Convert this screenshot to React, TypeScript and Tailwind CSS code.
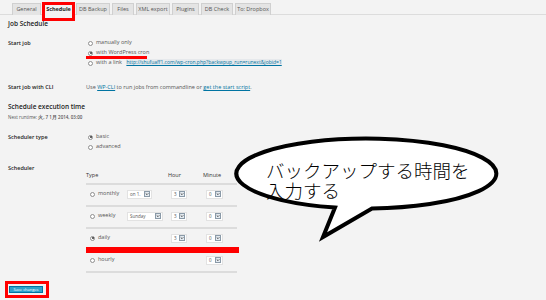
const tabs = ['General', 'Schedule', 'DB Backup', 'Files', 'XML export', 'Plugins', 'DB Check', 'To: Dropbox'];
const tabWidths = ['w-[29px]', 'w-[31px]', 'w-[34px]', 'w-[22px]', 'w-[34px]', 'w-[27px]', 'w-[32px]', 'w-[36px]'];

function Radio({ checked = false }: { checked?: boolean }) {
  return (
    <span className="inline-flex h-[5px] w-[5px] shrink-0 items-center justify-center rounded-full border border-[#8f8f8f] bg-white">
      {checked && <span className="h-[2px] w-[2px] rounded-full bg-[#333]" />}
    </span>
  );
}

function Select({ value, className }: { value: string; className: string }) {
  return (
    <span className={`flex h-[9px] items-center justify-between border border-[#e2e2e2] bg-white pl-[2px] pr-px ${className}`}>
      <span className="text-[4.5px] leading-none text-[#555]">{value}</span>
      <span className="flex h-[6px] w-[6px] items-center justify-center border border-[#8a9aa8] bg-[#e4ebf1]">
        <svg viewBox="0 0 6 6" className="h-[4px] w-[4px]">
          <path d="M1 2 L3 4 L5 2" fill="none" stroke="#333" strokeWidth="1.2" />
        </svg>
      </span>
    </span>
  );
}

function Label({ children }: { children: React.ReactNode }) {
  return <div className="w-[78px] shrink-0 text-[5.5px] font-semibold leading-[10px] text-[#222]">{children}</div>;
}

function Option({ checked, children }: { checked?: boolean; children: React.ReactNode }) {
  return (
    <div className="flex h-[10px] items-center gap-[3px] text-[5.5px] text-[#555]">
      <Radio checked={checked} />
      <span className="leading-none">{children}</span>
    </div>
  );
}

const rows = [
  { type: 'monthly', day: 'on 1.', dayW: 'w-[25px]', hour: true },
  { type: 'weekly', day: 'Sunday', dayW: 'w-[36px]', hour: true },
  { type: 'daily', checked: true, hour: true },
  { type: 'hourly', hour: false },
];

export default function App() {
  return (
    <div className="relative h-[300px] w-[546px] overflow-hidden bg-[#f3f3f3] font-['Open_Sans','Liberation_Sans',sans-serif] text-[#444]">
      <div className="flex h-[15px] items-end gap-[2px] border-b border-[#dcdcdc] pl-[12px]">
        {tabs.map((t, i) => (
          <div
            key={t}
            className={`relative -mb-px h-[12px] border border-b-0 border-[#d0d0d0] text-center text-[5.5px] leading-[11px] ${tabWidths[i]} ${
              i === 1 ? 'bg-[#f3f3f3] font-bold text-[#222]' : 'bg-[#e4e4e4] text-[#555]'
            }`}
          >
            {t}
            {i === 1 && <span className="absolute -left-[2px] -top-[2px] h-[19px] w-[33px] border-[3px] border-[#ff0000]" />}
          </div>
        ))}
      </div>

      <div className="px-[8px]">
        <h2 className="mt-[4px] h-[10px] text-[6.5px] font-semibold leading-[10px] text-[#222]">Job Schedule</h2>

        <div className="mt-[9px] flex">
          <Label>Start job</Label>
          <div className="relative flex flex-col pl-[2px]">
            <Option>manually only</Option>
            <Option checked>with WordPress cron</Option>
            <Option>
              with a link{' '}
              <span className="ml-[3px] bg-[#e6e9ec] text-[5px] text-[#0074a2] underline">
                http://shufuaff1.com/wp-cron.php?backwpup_run=runext&amp;jobid=1
              </span>
            </Option>
            <span className="absolute left-0 top-[18px] h-[3px] w-[61px] bg-[#ff0000]" />
          </div>
        </div>

        <div className="mt-[14px] flex h-[10px]">
          <Label>Start job with CLI</Label>
          <div className="text-[5.5px] leading-[10px] text-[#555]">
            Use <span className="text-[#0074a2] underline">WP-CLI</span> to run jobs from commandline or{' '}
            <span className="text-[#0074a2] underline">get the start script</span>.
          </div>
        </div>

        <h2 className="mt-[9px] h-[12px] text-[6.5px] font-semibold leading-[12px] text-[#222]">Schedule execution time</h2>
        <div className="h-[8px] text-[4.5px] leading-[8px] text-[#555]">
          Next runtime: <span className="font-semibold">火, 7 1月 2014, 03:00</span>
        </div>

        <div className="mt-[11px] flex">
          <Label>Scheduler type</Label>
          <div className="flex flex-col pl-[2px]">
            <Option checked>basic</Option>
            <Option>advanced</Option>
          </div>
        </div>

        <div className="mt-[11px] flex">
          <Label>Scheduler</Label>
          <div className="w-[151px] pt-[7px] text-[5.5px] text-[#555]">
            <div className="flex h-[15px] border-b-2 border-[#dcdcdc] leading-[10px] text-[#333]">
              <span className="w-[82px]">Type</span>
              <span className="w-[35px]">Hour</span>
              <span>Minute</span>
            </div>
            {rows.map((r) => (
              <div key={r.type} className="relative flex h-[22px] items-center border-b-2 border-[#dcdcdc] pb-[2px]">
                <div className="flex w-[82px] items-center gap-[3px] pl-[4px]">
                  <Radio checked={r.checked} />
                  <span className="w-[26px] leading-none">{r.type}</span>
                  {r.day && <Select value={r.day} className={r.dayW} />}
                </div>
                <div className="w-[35px] pl-[3px]">{r.hour && <Select value="3" className="w-[16px]" />}</div>
                <div className="pl-[3px]">
                  <Select value="0" className="w-[17px]" />
                </div>
                {r.type === 'daily' && <span className="absolute left-0 top-[18px] h-[6px] w-[153px] bg-[#ff0000]" />}
              </div>
            ))}
          </div>
        </div>

        <div className="mt-[13px] flex">
          <button className="relative ml-px h-[7px] w-[34px] border border-[#0074a2] bg-[#2ea2cc] text-[4px] leading-[5px] text-white">
            Save changes
            <span className="absolute -left-[5px] -top-[6px] h-[17px] w-[44px] border-[3px] border-[#ff0000]" />
          </button>
        </div>
      </div>

      <svg viewBox="0 0 546 300" className="pointer-events-none absolute left-0 top-0 h-[300px] w-[546px]">
        <path
          d="M 335 207.5 A 130 35 0 1 1 372 208.5 L 323 237 Z"
          fill="white"
          stroke="black"
          strokeWidth="4"
          strokeLinejoin="miter"
        />
      </svg>
      <div className="absolute left-[266px] top-[160px] font-['Noto_Sans_CJK_JP',sans-serif] text-[18.5px] font-light leading-[20px] text-black">
        <div>バックアップする時間を</div>
        <div>入力する</div>
      </div>
    </div>
  );
}
